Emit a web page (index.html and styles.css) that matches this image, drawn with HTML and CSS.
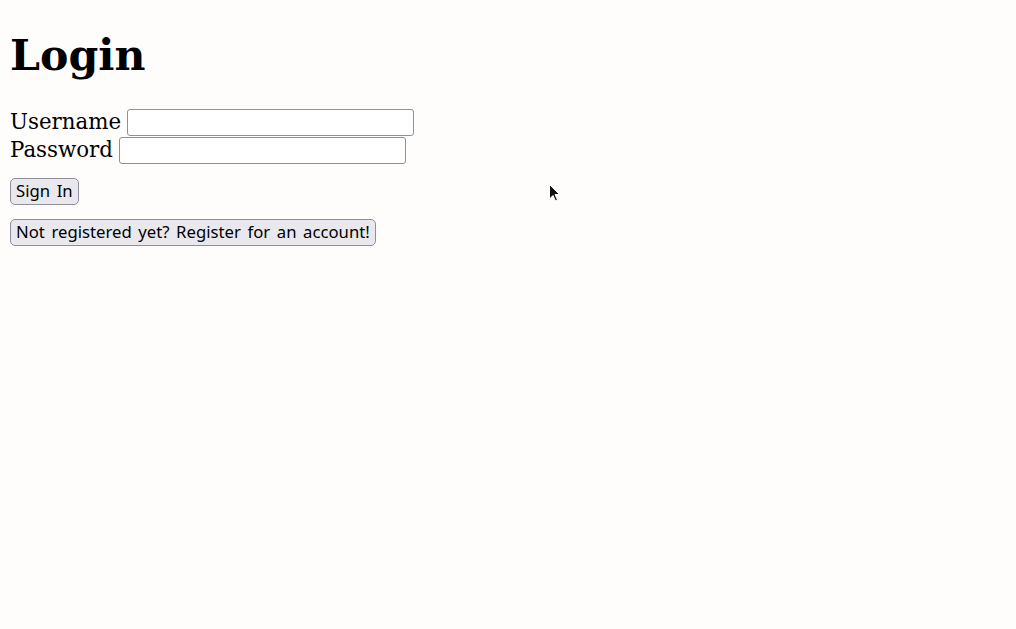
FILE: index.html
```html
<!DOCTYPE html>
<html>
<head>
<meta charset="utf-8">
<title>Login</title>
<link rel="stylesheet" href="styles.css">
</head>
<body class="page">
<h1 class="title">Login</h1>
<form class="login-form">
<div class="field-row"><label class="field-label">Username</label> <input class="field-input" type="text"></div>
<div class="field-row"><label class="field-label">Password</label> <input class="field-input" type="password"></div>
<div class="row"><button class="btn" type="button">Sign In</button></div>
<div class="row"><button class="btn" type="button">Not registered yet? Register for an account!</button></div>
</form>
<svg class="cursor" width="12" height="20" viewBox="0 0 12 20"><path d="M0.5 0.5 L0.5 15 L4 11.5 L6.5 17 L8.5 16 L6 10.5 L10.5 10.5 Z" fill="#111" stroke="#fff" stroke-width="1"/></svg>
</body>
</html>
```
FILE: styles.css
```css
html { background: #fffdfc; }
.page {
  margin: 10px;
  font-family: "DejaVu Serif", serif;
  font-size: 21.33px;
  color: #000;
}
.title { font-size: 2em; margin: 20.5px 0 28.5px; line-height: 1.15; }
.field-row { height: 28px; display: flex; align-items: center; }
.field-label { line-height: 28px; margin-right: 6px; }
.field-input {
  font: 16.7px "Noto Sans", sans-serif;
  width: 287px;
  height: 27px;
  box-sizing: border-box;
  border: 1px solid #8f8f9d;
  border-radius: 3px;
  background: #fff;
  padding: 1px 2px;
  margin: 0;
}
.row { margin: 14px 0; display: flex; }
.btn {
  font: 16.7px "Noto Sans", sans-serif;
  word-spacing: 2.3px;
  height: 27px;
  box-sizing: border-box;
  padding: 0 5px;
  border: 1px solid #8f8f9d;
  border-radius: 5px;
  background: #e9e9ed;
  color: #000;
  line-height: 1;
}
.cursor { position: absolute; left: 549px; top: 184px; }
```
